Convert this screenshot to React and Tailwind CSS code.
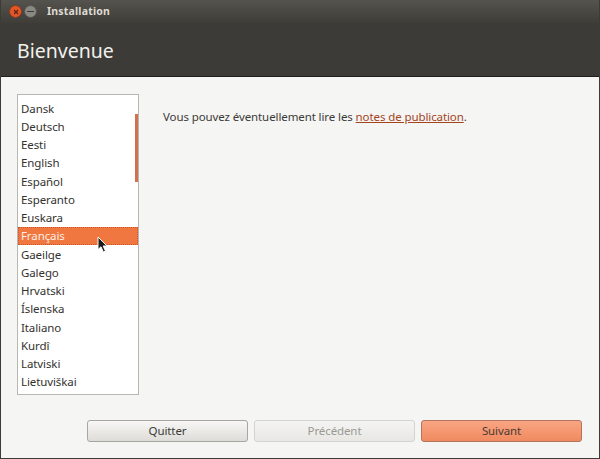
const languages = ['Dansk', 'Deutsch', 'Eesti', 'English', 'Español', 'Esperanto', 'Euskara', 'Français', 'Gaeilge', 'Galego', 'Hrvatski', 'Íslenska', 'Italiano', 'Kurdî', 'Latviski', 'Lietuviškai'];

const App = () => {
    return (
        <div className="w-[600px] h-[459px] flex flex-col overflow-hidden bg-[#f5f5f4] font-['Noto_Sans',sans-serif] text-[11.5px] tracking-[-0.1px] text-[#3c3b37] border-x border-b border-[#3c3b37]">
            <div className="h-[23px] shrink-0 flex items-center bg-gradient-to-b from-[#55534d] to-[#3e3d38] pl-[8px]">
                <div className="w-[13px] h-[13px] rounded-full bg-[#e2562a] border border-[#8a3a1c] flex items-center justify-center">
                    <svg width="6" height="6" viewBox="0 0 6 6"><path d="M1 1L5 5M5 1L1 5" stroke="#5b2410" strokeWidth="1.2" /></svg>
                </div>
                <div className="w-[13px] h-[13px] ml-[2px] rounded-full bg-[#8a8883] border border-[#55534d] flex items-center justify-center">
                    <div className="w-[7px] h-[1.5px] bg-[#3c3b37]" />
                </div>
                <span className="ml-[10px] text-[10.5px] font-bold text-[#dfdbd2] tracking-[0.2px]">Installation</span>
            </div>

            <div className="h-[54px] shrink-0 flex items-center bg-[#3c3b37] border-b border-[#1e1e1c] pl-[16px] pt-[3px]">
                <h1 className="text-[19.5px] tracking-normal text-[#f2f1ed]">Bienvenue</h1>
            </div>

            <div className="flex-1 flex flex-col pl-[16px] pr-[17px] pt-[17px] pb-[16px]">
                <div className="flex flex-1">
                    <div className="relative w-[122px] h-[301px] shrink-0 bg-white border border-[#b9b7b3] pt-[4px]">
                        {languages.map(lang => (
                            <div
                                key={lang}
                                className={lang === 'Français'
                                    ? 'h-[18.27px] pl-[3px] flex items-center bg-[#f0773f] text-[#fbeee6] outline-1 outline-dotted outline-offset-[-1px] outline-[#c9582a]'
                                    : 'h-[18.27px] pl-[3px] flex items-center text-[#33322e]'}
                            >
                                {lang}
                            </div>
                        ))}
                        <div className="absolute top-[19px] right-0 w-[3px] h-[68px] bg-[#d0734c]" />
                        <svg className="absolute left-[79px] top-[141px]" width="12" height="17" viewBox="0 0 12 17">
                            <path d="M1 1V13.5L4 10.8L6.3 16L8.5 15L6.2 10H10Z" fill="#1c1c1c" stroke="#ffffff" strokeWidth="1" />
                        </svg>
                    </div>
                    <p className="ml-[24px] mt-[14px] text-[#3c3b37]">
                        Vous pouvez éventuellement lire les <a href="#" className="text-[#a3441c] underline">notes de publication</a>.
                    </p>
                </div>

                <div className="flex justify-end gap-[6px]">
                    <button className="w-[161px] h-[22px] rounded-[3px] border border-[#a8a6a1] bg-gradient-to-b from-[#f8f7f6] to-[#dedcd8] text-[#3c3b37]">Quitter</button>
                    <button className="w-[161px] h-[22px] rounded-[3px] border border-[#d4d3cf] bg-gradient-to-b from-[#f4f4f2] to-[#e8e7e4] text-[#9a9994]">Précédent</button>
                    <button className="w-[161px] h-[22px] rounded-[3px] border border-[#b0755c] bg-gradient-to-b from-[#f9a583] to-[#f08a60] text-[#4a3a32]">Suivant</button>
                </div>
            </div>
        </div>
    );
};

export default App;
